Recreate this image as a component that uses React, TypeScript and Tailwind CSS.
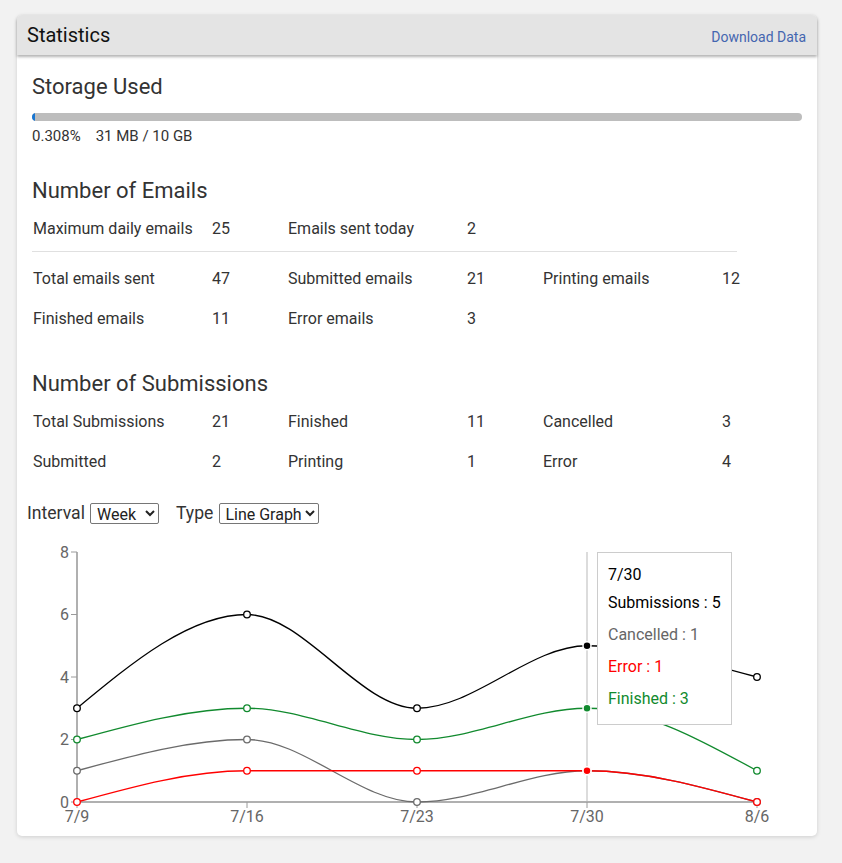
import React from "react";

type Pt = [number, number];

function monotonePath(pts: Pt[]): string {
  const n = pts.length;
  const x = pts.map((p) => p[0]);
  const y = pts.map((p) => p[1]);
  const s: number[] = [];
  for (let i = 0; i < n - 1; i++) s[i] = (y[i + 1] - y[i]) / (x[i + 1] - x[i]);
  const t: number[] = new Array(n).fill(0);
  for (let i = 1; i < n - 1; i++) {
    const h0 = x[i] - x[i - 1];
    const h1 = x[i + 1] - x[i];
    const s0 = s[i - 1];
    const s1 = s[i];
    const p = (s0 * h1 + s1 * h0) / (h0 + h1);
    t[i] =
      (Math.sign(s0) + Math.sign(s1)) *
        Math.min(Math.abs(s0), Math.abs(s1), 0.5 * Math.abs(p)) || 0;
  }
  t[0] = (3 * s[0] - t[1]) / 2;
  t[n - 1] = (3 * s[n - 2] - t[n - 2]) / 2;
  let d = `M${x[0]},${y[0]}`;
  for (let i = 0; i < n - 1; i++) {
    const dx = (x[i + 1] - x[i]) / 3;
    d += `C${x[i] + dx},${y[i] + dx * t[i]},${x[i + 1] - dx},${y[i + 1] - dx * t[i + 1]},${x[i + 1]},${y[i + 1]}`;
  }
  return d;
}

const X = (i: number) => 50 + 170 * i;
const Y = (v: number) => 262 - 31.25 * v;

const labels = ["7/9", "7/16", "7/23", "7/30", "8/6"];
const series = [
  { name: "Submissions", color: "#000000", data: [3, 6, 3, 5, 4] },
  { name: "Cancelled", color: "#6b6b6b", data: [1, 2, 0, 1, 0] },
  { name: "Error", color: "#ff0000", data: [0, 1, 1, 1, 0] },
  { name: "Finished", color: "#118a2e", data: [2, 3, 2, 3, 1] },
];
const ACTIVE = 3;

function Chart() {
  return (
    <div className="relative w-[780px] h-[290px]">
      <svg width={780} height={290} className="block">
        <line x1={X(ACTIVE)} y1={12} x2={X(ACTIVE)} y2={262} stroke="#dcdcdc" strokeWidth={2} />
        <line x1={50} y1={12} x2={50} y2={263} stroke="#b0b0b0" strokeWidth={2} />
        {[0, 2, 4, 6, 8].map((v) => (
          <g key={v}>
            <line x1={44} y1={Y(v)} x2={50} y2={Y(v)} stroke="#9a9a9a" strokeWidth={1} />
            <text
              x={42}
              y={Y(v)}
              textAnchor="end"
              dominantBaseline="central"
              fill="#666"
              fontSize={16}
              fontFamily="Roboto, sans-serif"
            >
              {v}
            </text>
          </g>
        ))}
        <line x1={49} y1={262} x2={731} y2={262} stroke="#b0b0b0" strokeWidth={2} />
        {labels.map((l, i) => (
          <g key={l}>
            <line x1={X(i)} y1={262} x2={X(i)} y2={268} stroke="#9a9a9a" strokeWidth={1} />
            <text
              x={X(i)}
              y={276}
              textAnchor="middle"
              dominantBaseline="central"
              fill="#666"
              fontSize={16}
              fontFamily="Roboto, sans-serif"
            >
              {l}
            </text>
          </g>
        ))}
        {series.map((s) => (
          <path
            key={s.name}
            d={monotonePath(s.data.map((v, i) => [X(i), Y(v)] as Pt))}
            fill="none"
            stroke={s.color}
            strokeWidth={1.3}
          />
        ))}
        {series.map((s) =>
          s.data.map((v, i) =>
            i === ACTIVE ? (
              <circle key={s.name + i} cx={X(i)} cy={Y(v)} r={4} fill={s.color} stroke="#fff" strokeWidth={1.5} />
            ) : (
              <circle key={s.name + i} cx={X(i)} cy={Y(v)} r={3.3} fill="#fff" stroke={s.color} strokeWidth={1.3} />
            )
          )
        )}
      </svg>
      <div className="absolute left-[570px] top-[12px] bg-white border border-[#cccccc] px-[10px] pt-[10px] pb-[9px] whitespace-nowrap text-[16px]">
        <div className="leading-[24px] text-[#000]">7/30</div>
        {series.map((s) => (
          <div key={s.name} className="leading-[24px] py-[4px]" style={{ color: s.color === "#6b6b6b" ? "#666666" : s.color }}>
            {s.name} : {s.data[ACTIVE]}
          </div>
        ))}
      </div>
    </div>
  );
}

function Cell({ label, value }: { label: string; value: string }) {
  return (
    <>
      <div className="w-[180px] pl-[1px]">{label}</div>
      <div className="w-[75px]">{value}</div>
    </>
  );
}

function Row({ cells }: { cells: [string, string][] }) {
  return (
    <div className="flex items-center h-[40px] text-[16px] text-[#333]">
      {cells.map(([l, v]) => (
        <Cell key={l} label={l} value={v} />
      ))}
    </div>
  );
}

export default function App() {
  return (
    <div
      className="min-h-screen bg-[#f2f2f2] pt-[15px] pl-[17px] pb-[27px]"
      style={{ fontFamily: "Roboto, 'Noto Sans', sans-serif" }}
    >
      <div className="w-[800px] bg-white rounded-[5px] shadow-[0_1px_4px_rgba(0,0,0,0.15)]">
        <div className="relative z-10 h-[40px] bg-[#e4e4e4] rounded-t-[5px] flex items-center justify-between pl-[10px] pr-[11px] shadow-[0_2px_3px_rgba(0,0,0,0.3)]">
          <div className="text-[20px] text-[#111] leading-[24px]">Statistics</div>
          <div className="text-[14px] text-[#4466b0] leading-[20px] mt-[3px]">Download Data</div>
        </div>
        <div className="px-[15px] pb-[6px] text-[#333]">
          <h2 className="mt-[19px] text-[22px] leading-[26px]">Storage Used</h2>
          <div className="mt-[13px] h-[8px] rounded-full bg-[#bdbdbd] overflow-hidden">
            <div className="h-full w-[3px] bg-[#1976d2] rounded-l-full" />
          </div>
          <div className="mt-[5px] text-[15px] leading-[20px]">
            <span className="mr-[15px]">0.308%</span>
            <span>31 MB / 10 GB</span>
          </div>

          <h2 className="mt-[32px] text-[22px] leading-[26px]">Number of Emails</h2>
          <div className="mt-[5px]">
            <Row
              cells={[
                ["Maximum daily emails", "25"],
                ["Emails sent today", "2"],
              ]}
            />
            <div className="mt-[2px] w-[705px] h-px bg-[#e0e0e0]" />
            <div className="mt-[7px]">
              <Row
                cells={[
                  ["Total emails sent", "47"],
                  ["Submitted emails", "21"],
                  ["Printing emails", "12"],
                ]}
              />
              <Row
                cells={[
                  ["Finished emails", "11"],
                  ["Error emails", "3"],
                ]}
              />
            </div>
          </div>

          <h2 className="mt-[32px] text-[22px] leading-[26px]">Number of Submissions</h2>
          <div className="mt-[5px]">
            <Row
              cells={[
                ["Total Submissions", "21"],
                ["Finished", "11"],
                ["Cancelled", "3"],
              ]}
            />
            <Row
              cells={[
                ["Submitted", "2"],
                ["Printing", "1"],
                ["Error", "4"],
              ]}
            />
          </div>

          <div className="-ml-[5px]">
            <div className="mt-[19px] h-[24px] flex items-center text-[17.6px] text-[#333]">
              <span>Interval</span>
              <select
                defaultValue="Week"
                className="ml-[5px] w-[69px] h-[21px] border border-[#767676] rounded-[2px] text-[16px] text-[#222] bg-white pl-[2px]"
              >
                <option>Day</option>
                <option>Week</option>
                <option>Month</option>
              </select>
              <span className="ml-[17px]">Type</span>
              <select
                defaultValue="Line Graph"
                className="ml-[6px] w-[100px] h-[21px] border border-[#767676] rounded-[2px] text-[16px] text-[#222] bg-white pl-[1px]"
              >
                <option>Line Graph</option>
                <option>Bar Graph</option>
              </select>
            </div>
            <div className="mt-[15px]">
              <Chart />
            </div>
          </div>
        </div>
      </div>
    </div>
  );
}
